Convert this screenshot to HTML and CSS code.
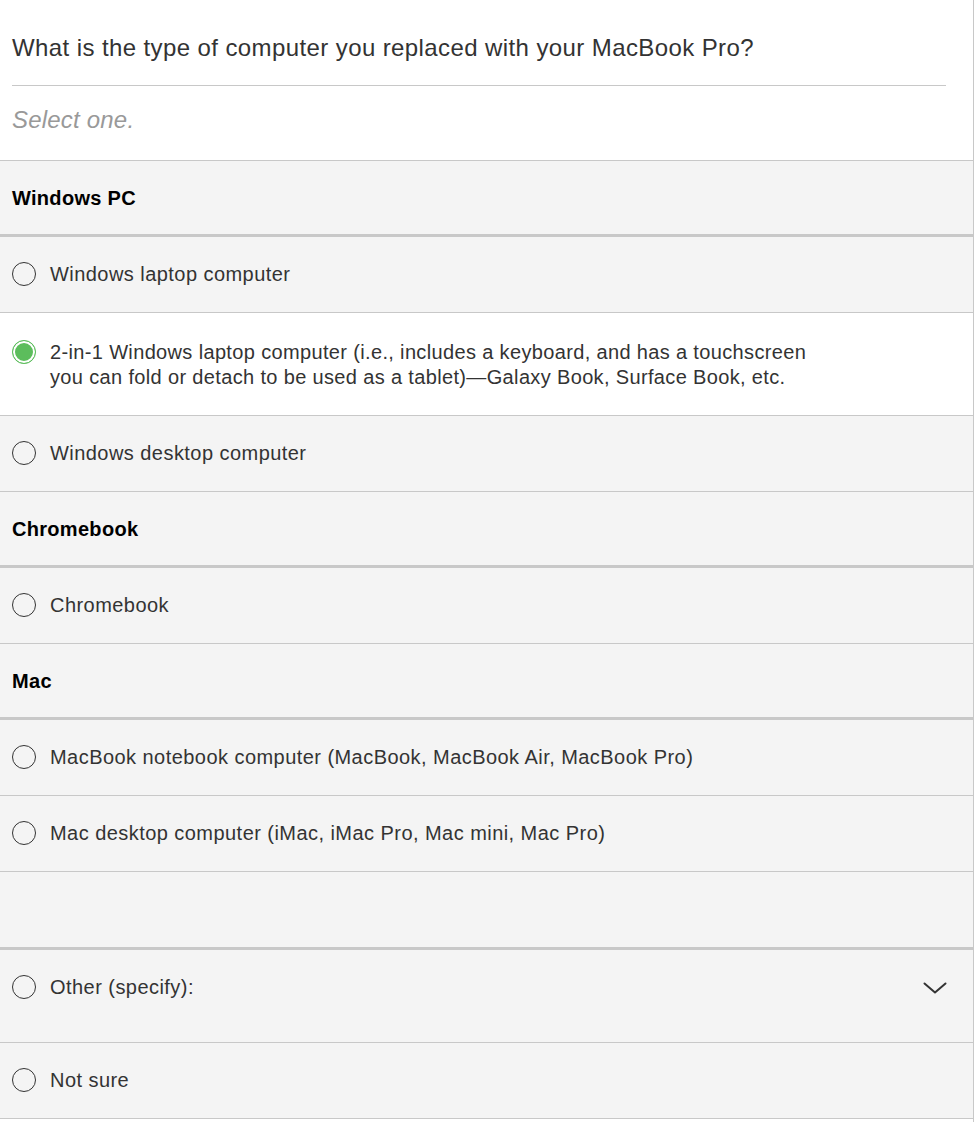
FILE: index.html
```html
<!DOCTYPE html>
<html lang="en">
<head>
<meta charset="utf-8">
<title>Survey question</title>
<link rel="stylesheet" href="styles.css">
</head>
<body>
<div class="survey">
  <div class="question">
    <h1 class="q-text">What is the type of computer you replaced with your MacBook Pro?</h1>
    <div class="q-rule"></div>
    <p class="q-hint">Select one.</p>
  </div>
  <ul class="options">
    <li class="group-head">Windows PC</li>
    <li class="option"><span class="radio"></span><span class="label">Windows laptop computer</span></li>
    <li class="option option--selected"><span class="radio radio--on"></span><span class="label">2-in-1 Windows laptop computer (i.e., includes a keyboard, and has a touchscreen<br>you can fold or detach to be used as a tablet)—Galaxy Book, Surface Book, etc.</span></li>
    <li class="option"><span class="radio"></span><span class="label">Windows desktop computer</span></li>
    <li class="group-head">Chromebook</li>
    <li class="option"><span class="radio"></span><span class="label">Chromebook</span></li>
    <li class="group-head">Mac</li>
    <li class="option"><span class="radio"></span><span class="label">MacBook notebook computer (MacBook, MacBook Air, MacBook Pro)</span></li>
    <li class="option"><span class="radio"></span><span class="label">Mac desktop computer (iMac, iMac Pro, Mac mini, Mac Pro)</span></li>
    <li class="spacer"></li>
    <li class="option option--other"><span class="radio"></span><span class="label">Other (specify):</span>
      <svg class="chevron" width="24" height="12" viewBox="0 0 24 12" aria-hidden="true"><path d="M1.5 1.5 L12 10.5 L22.5 1.5" fill="none" stroke="#333" stroke-width="2" stroke-linecap="round" stroke-linejoin="round"/></svg>
    </li>
    <li class="option"><span class="radio"></span><span class="label">Not sure</span></li>
  </ul>
</div>
</body>
</html>
```

FILE: styles.css
```css
html, body {
  margin: 0;
  padding: 0;
  background: #ffffff;
}

body {
  font-family: "Liberation Sans", Arial, Helvetica, sans-serif;
  color: #333333;
}

.survey {
  width: 973px;
  min-height: 1122px;
  border-right: 1px solid #c8c8c8;
  background: #ffffff;
}

.question {
  padding: 34px 27px 26px 12px;
  border-bottom: 1px solid #c8c8c8;
}

.q-text {
  margin: 0;
  font-size: 24px;
  line-height: 28px;
  letter-spacing: 0.4px;
  font-weight: normal;
  color: #333333;
}

.q-rule {
  height: 1px;
  background: #c8c8c8;
  margin: 23px 0 20px;
}

.q-hint {
  margin: 0;
  font-size: 24px;
  line-height: 28px;
  letter-spacing: 0.2px;
  font-style: italic;
  color: #999999;
}

.options {
  list-style: none;
  margin: 0;
  padding: 0;
}

.group-head {
  background: #f4f4f4;
  padding: 25px 12px 23px;
  font-size: 20px;
  line-height: 25px;
  letter-spacing: 0.3px;
  font-weight: bold;
  color: #000000;
  border-bottom: 3px solid #c8c8c8;
}

.option {
  display: flex;
  align-items: flex-start;
  gap: 14px;
  background: #f4f4f4;
  padding: 25px 12px 25px;
  font-size: 20px;
  line-height: 25px;
  letter-spacing: 0.45px;
  color: #333333;
  border-bottom: 1px solid #c8c8c8;
}

.option--selected {
  background: #ffffff;
  padding-top: 27px;
  padding-bottom: 25px;
  letter-spacing: 0.35px;
}

.option--other {
  padding-bottom: 42px;
}

.label {
  flex: 1;
}

.radio {
  flex: none;
  box-sizing: border-box;
  width: 24px;
  height: 24px;
  border: 1.5px solid #333333;
  border-radius: 50%;
  background: transparent;
}

.radio--on {
  border: 1.5px solid #5cbd5c;
  background: #5cbd5c;
  box-shadow: inset 0 0 0 2px #ffffff;
}

.chevron {
  flex: none;
  margin-top: 7px;
  margin-right: 14px;
}

.spacer {
  height: 75px;
  background: #f4f4f4;
  border-bottom: 3px solid #c8c8c8;
}
```
